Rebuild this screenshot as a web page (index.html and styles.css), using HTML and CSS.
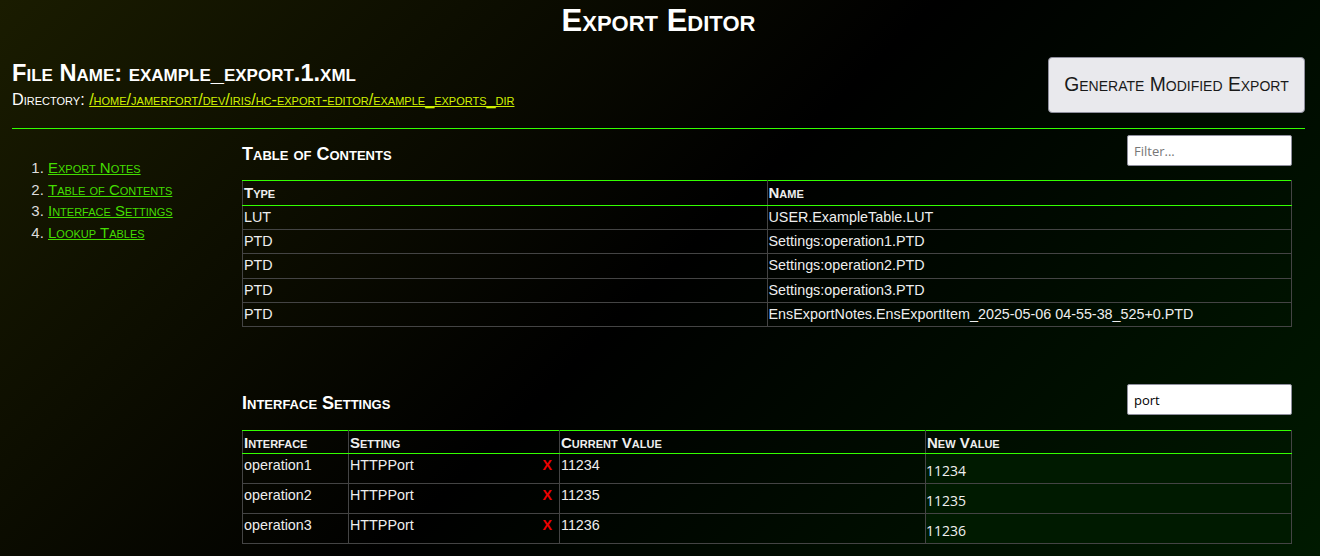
FILE: index.html
```html
<!DOCTYPE html>
<html lang="en">
<head>
<meta charset="utf-8">
<title>Export Editor</title>
<link rel="stylesheet" href="styles.css">
</head>
<body>
<div class="page">
  <h1 class="title">Export Editor</h1>
  <header class="file-head">
    <div class="file-info">
      <h2 class="file-name">File Name: example_export.1.xml</h2>
      <div class="dir">Directory: <a href="#" class="dir-link">/home/jamerfort/dev/iris/hc-export-editor/example_exports_dir</a></div>
    </div>
    <button class="gen-btn">Generate Modified Export</button>
  </header>
  <hr class="rule">
  <div class="main">
    <nav class="toc-nav">
      <ol>
        <li><a href="#">Export Notes</a></li>
        <li><a href="#">Table of Contents</a></li>
        <li><a href="#">Interface Settings</a></li>
        <li><a href="#">Lookup Tables</a></li>
      </ol>
    </nav>
    <div class="content">
      <section class="sec">
        <div class="sec-head">
          <h3>Table of Contents</h3>
          <input class="filter" type="text" placeholder="Filter...">
        </div>
        <table class="grid toc">
          <thead><tr><th>Type</th><th>Name</th></tr></thead>
          <tbody>
            <tr><td>LUT</td><td>USER.ExampleTable.LUT</td></tr>
            <tr><td>PTD</td><td>Settings:operation1.PTD</td></tr>
            <tr><td>PTD</td><td>Settings:operation2.PTD</td></tr>
            <tr><td>PTD</td><td>Settings:operation3.PTD</td></tr>
            <tr><td>PTD</td><td>EnsExportNotes.EnsExportItem_2025-05-06 04-55-38_525+0.PTD</td></tr>
          </tbody>
        </table>
      </section>
      <section class="sec sec2">
        <div class="sec-head">
          <h3>Interface Settings</h3>
          <input class="filter" type="text" value="port">
        </div>
        <table class="grid iface">
          <colgroup><col class="c1"><col class="c2"><col class="c3"><col class="c4"></colgroup>
          <thead><tr><th>Interface</th><th>Setting</th><th>Current Value</th><th>New Value</th></tr></thead>
          <tbody>
            <tr><td>operation1</td><td class="set"><span class="sname">HTTPPort</span><span class="x">X</span></td><td>11234</td><td class="nv"><input class="nv-in" type="text" value="11234"></td></tr>
            <tr><td>operation2</td><td class="set"><span class="sname">HTTPPort</span><span class="x">X</span></td><td>11235</td><td class="nv"><input class="nv-in" type="text" value="11235"></td></tr>
            <tr><td>operation3</td><td class="set"><span class="sname">HTTPPort</span><span class="x">X</span></td><td>11236</td><td class="nv"><input class="nv-in" type="text" value="11236"></td></tr>
          </tbody>
        </table>
      </section>
    </div>
  </div>
</div>
</body>
</html>
```

FILE: styles.css
```css
html, body {
  margin: 0;
  padding: 0;
}
body {
  min-height: 556px;
  background: linear-gradient(135deg, #1a1c00 0%, #000 50%, #001a00 100%);
  color: #fff;
  font-family: "Liberation Sans", Arial, sans-serif;
  font-size: 14px;
  overflow: hidden;
}
.page {
  width: 1293px;
  margin-left: 12px;
}
.title {
  margin: 0;
  padding-top: 3px;
  height: 36px;
  text-align: center;
  font-family: "Liberation Sans", sans-serif;
  font-variant: small-caps;
  font-size: 31px;
  font-weight: bold;
  line-height: 36px;
}
.file-head {
  display: flex;
  justify-content: space-between;
  align-items: flex-start;
  height: 56px;
  margin-top: 18px;
}
.file-info {
  padding-top: 3px;
}
.file-name {
  margin: 0;
  height: 26px;
  font-family: "Liberation Sans", sans-serif;
  font-variant: small-caps;
  font-size: 23.6px;
  font-weight: bold;
  line-height: 26px;
}
.dir {
  margin-top: 4px;
  height: 18px;
  font-family: "Liberation Sans", sans-serif;
  font-variant: small-caps;
  font-size: 16.2px;
  line-height: 18px;
}
.dir-link {
  color: #d0f000;
}
.gen-btn {
  width: 257px;
  height: 56px;
  background: #e9e9ed;
  border: 1px solid #8f8f9d;
  border-radius: 4px;
  color: #1a1a1a;
  font-family: "Liberation Sans", sans-serif;
  font-variant: small-caps;
  font-size: 19.3px;
  padding: 0;
}
.rule {
  margin: 15px 0 0 0;
  border: 0;
  height: 1px;
  background: #33ff00;
}
.main {
  display: flex;
}
.toc-nav {
  width: 230px;
  flex: none;
}
.toc-nav ol {
  margin: 28px 0 0 0;
  padding-left: 36px;
  font-size: 15px;
  line-height: 21.5px;
  color: #ddd;
}
.toc-nav a {
  color: #44dd00;
  font-variant: small-caps;
}
.content {
  flex: 1;
  margin-right: 13px;
}
.sec-head {
  display: flex;
  justify-content: space-between;
  align-items: flex-start;
  margin-top: 6px;
  height: 45px;
}
.sec-head h3 {
  margin: 9px 0 0 0;
  font-variant: small-caps;
  font-size: 18px;
  font-weight: bold;
  line-height: 20px;
}
.filter {
  width: 165px;
  height: 31px;
  box-sizing: border-box;
  border: 1px solid #8f8f9d;
  border-radius: 2px;
  padding: 0 6px;
  font-family: "Open Sans", sans-serif;
  font-size: 13px;
  color: #000;
  background: #fff;
}
.filter::placeholder {
  color: #777;
}
.sec2 {
  margin-top: 57px;
}
.sec2 .sec-head {
  height: 46px;
}
.sec2 .sec-head h3 {
  margin-top: 9px;
}
.grid {
  width: 100%;
  border-collapse: collapse;
  table-layout: fixed;
  font-size: 14.33px;
}
.grid th, .grid td {
  border: 1px solid #444;
  text-align: left;
  padding: 3px 1px;
  line-height: 17px;
  height: 17px;
  vertical-align: top;
  color: #eee;
}
.grid th {
  font-variant: small-caps;
  font-weight: bold;
  font-size: 15px;
  border-top: 1px solid #33ff00;
  border-bottom: 1px solid #33ff00;
  padding: 3px 1px 2px;
}
.toc th {
  height: 18px;
  padding-bottom: 3px;
}
.toc tbody tr:nth-child(3) td {
  height: 18px;
}
.iface .c1 { width: 106px; }
.iface .c2 { width: 211px; }
.iface .c3 { width: 366px; }
.iface td { height: 22px; }
.sname {
  float: left;
}
.set .x {
  float: right;
  color: #e00;
  font-weight: bold;
  margin-right: 6px;
}
.grid td.nv {
  background: #001a00;
  padding: 0;
}
.nv-in {
  display: block;
  width: 100%;
  box-sizing: border-box;
  height: 29px;
  border: 0;
  background: transparent;
  color: #f0f0f0;
  font-family: "Open Sans", sans-serif;
  font-size: 14px;
  padding: 3px 0 0 0;
}
```
